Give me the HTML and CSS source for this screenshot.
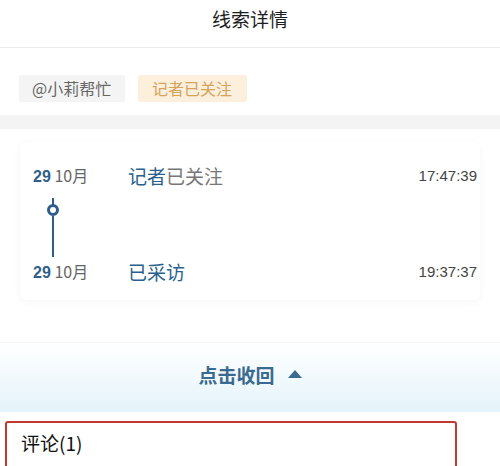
FILE: index.html
```html
<!DOCTYPE html>
<html lang="zh-CN">
<head>
    <meta charset="UTF-8">
    <title>线索详情</title>
    <link rel="stylesheet" href="styles.css">
</head>
<body>
    <div class="page">
        <div class="header">线索详情</div>

        <div class="tags">
            <span class="tag tag-user">@小莉帮忙</span>
            <span class="tag tag-status">记者已关注</span>
        </div>

        <div class="band"></div>

        <div class="timeline-card">
            <div class="row">
                <div class="date"><b>29</b> 10月</div>
                <div class="event"><span class="hl">记者</span>已关注</div>
                <div class="time">17:47:39</div>
            </div>
            <div class="track">
                <span class="dot"></span>
                <span class="line"></span>
            </div>
            <div class="row">
                <div class="date"><b>29</b> 10月</div>
                <div class="event hl">已采访</div>
                <div class="time">19:37:37</div>
            </div>
        </div>

        <div class="collapse">
            <span>点击收回</span>
            <span class="arrow"></span>
        </div>

        <div class="comments">评论(1)</div>
    </div>
</body>
</html>
```

FILE: styles.css
```css
* {
    margin: 0;
    padding: 0;
    box-sizing: border-box;
}

body {
    width: 500px;
    height: 466px;
    overflow: hidden;
    background: #ffffff;
    font-family: "Noto Sans CJK SC", "Liberation Sans", sans-serif;
    color: #222222;
}

.header {
    height: 48px;
    line-height: 38px;
    text-align: center;
    font-size: 19px;
    color: #1e1e1e;
    border-bottom: 1px solid #ebebeb;
}

.tags {
    display: flex;
    gap: 13px;
    padding: 27px 0 0 19px;
    height: 67px;
}

.tag {
    display: inline-block;
    height: 27px;
    line-height: 27px;
    font-size: 16px;
    border-radius: 3px;
}

.tag-user {
    width: 106px;
    padding-left: 13px;
    background: #f4f4f4;
    color: #666666;
}

.tag-status {
    width: 109px;
    padding-left: 14px;
    background: #fcefdc;
    color: #d6a35c;
}

.band {
    height: 14px;
    background: #f4f4f4;
}

.timeline-card {
    margin: 13px 20px 0 20px;
    height: 158px;
    padding: 20px 0 0 13px;
    background: #ffffff;
    border-radius: 6px;
    box-shadow: 0 2px 8px rgba(0, 0, 0, 0.04);
}

.row {
    display: flex;
    align-items: center;
    height: 26px;
    padding-right: 3px;
}

.date {
    width: 95px;
    font-size: 16px;
    color: #666666;
}

.date b {
    font-weight: 600;
    color: #2f5f8a;
    font-family: "Liberation Sans", sans-serif;
    font-size: 16px;
}

.event {
    flex: 1;
    font-size: 19px;
    color: #777777;
}

.hl {
    color: #2b5f8e;
}

.time {
    font-size: 15px;
    color: #444444;
    font-family: "Liberation Sans", sans-serif;
}

.track {
    display: flex;
    flex-direction: column;
    align-items: center;
    width: 12px;
    height: 70px;
    padding-top: 10px;
    margin-left: 14px;
}

.track::before {
    content: "";
    display: block;
    width: 2px;
    height: 7px;
    background: #2d5d8b;
}

.track .dot {
    display: block;
    width: 12px;
    height: 12px;
    margin-top: -1px;
    border: 3px solid #2d5d8b;
    border-radius: 50%;
    background: #ffffff;
}

.track .line {
    display: block;
    width: 2px;
    flex: 1;
    margin-bottom: 1px;
    background: #2d5d8b;
}

.collapse {
    display: flex;
    justify-content: center;
    align-items: center;
    gap: 13px;
    margin-top: 42px;
    height: 70px;
    padding-bottom: 7px;
    border-top: 1px solid #f3f3f3;
    background: linear-gradient(#ffffff, #e4f3fa);
    font-size: 19px;
    font-weight: 600;
    color: #3a6a90;
}

.arrow {
    width: 0;
    height: 0;
    border-left: 7px solid transparent;
    border-right: 7px solid transparent;
    border-bottom: 8px solid #3a6a90;
}

.comments {
    margin: 9px 0 0 5px;
    width: 452px;
    height: 60px;
    padding: 6px 0 0 14px;
    border: 2px solid #c2382f;
    border-radius: 3px;
    font-size: 19px;
    color: #111111;
}
```
